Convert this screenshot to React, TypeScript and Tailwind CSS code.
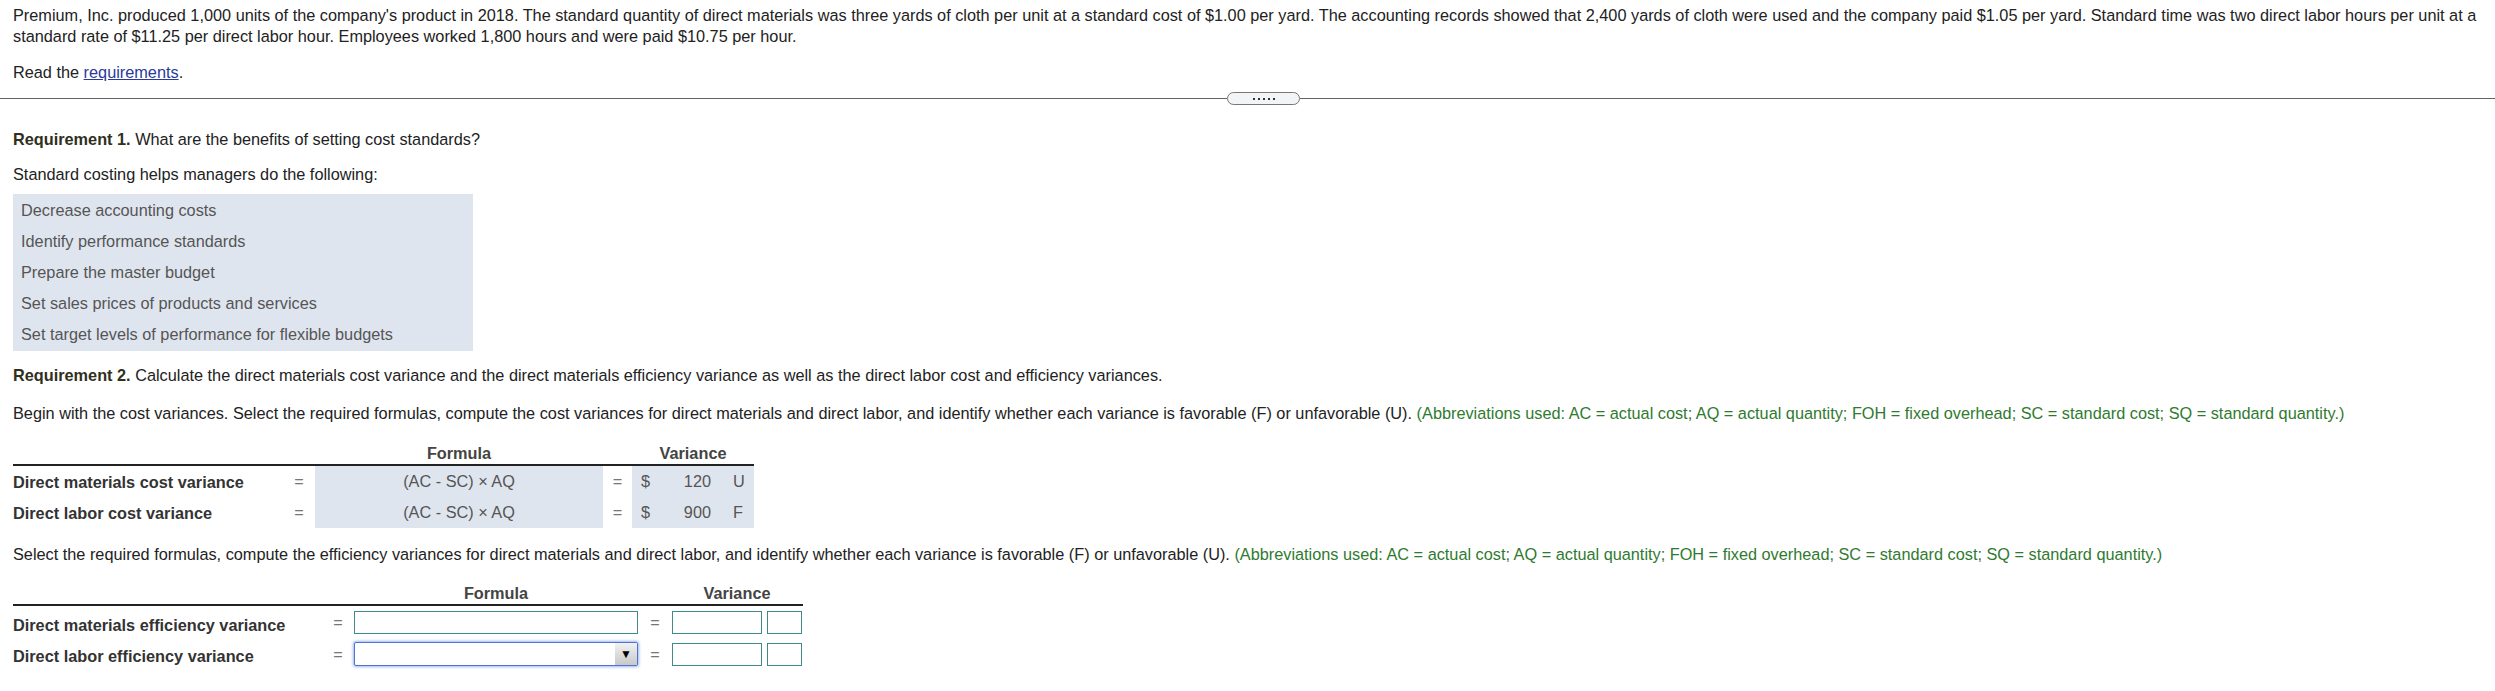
const ABBR =
  "(Abbreviations used: AC = actual cost; AQ = actual quantity; FOH = fixed overhead; SC = standard cost; SQ = standard quantity.)";

const BENEFITS = [
  "Decrease accounting costs",
  "Identify performance standards",
  "Prepare the master budget",
  "Set sales prices of products and services",
  "Set target levels of performance for flexible budgets",
];

const COST_ROWS = [
  { label: "Direct materials cost variance", amount: "120", fu: "U" },
  { label: "Direct labor cost variance", amount: "900", fu: "F" },
];

export default function App() {
  return (
    <div className="min-h-screen bg-white font-['Liberation_Sans',Arial,sans-serif] text-[16.3px] leading-[21px] text-[#222]">
      <div className="px-[13px] pt-[5px]">
        <p className="whitespace-nowrap">
          Premium, Inc. produced 1,000 units of the company's product in 2018. The standard quantity of direct
          materials was three yards of cloth per unit at a standard cost of $1.00 per yard. The accounting records
          showed that 2,400 yards of cloth were used and the company paid $1.05 per yard. Standard time was two
          direct labor hours per unit at a
          <br />
          standard rate of $11.25 per direct labor hour. Employees worked 1,800 hours and were paid $10.75 per hour.
        </p>
        <p className="mt-[15px]">
          Read the <span className="text-[#2a3a9c] underline">requirements</span>.
        </p>
      </div>

      <Divider />

      <div className="px-[13px]">
        <p className="mt-[24px]">
          <span className="font-bold text-[#30301c]">Requirement 1.</span> What are the benefits of setting cost
          standards?
        </p>
        <p className="mt-[14px]">Standard costing helps managers do the following:</p>
        <div className="mt-[9px] w-[460px] bg-[#dfe5ef] py-px">
          {BENEFITS.map((b) => (
            <div key={b} className="flex h-[31px] items-center px-[8px] text-[#555]">
              {b}
            </div>
          ))}
        </div>

        <p className="mt-[14px]">
          <span className="font-bold text-[#30301c]">Requirement 2.</span> Calculate the direct materials cost
          variance and the direct materials efficiency variance as well as the direct labor cost and efficiency
          variances.
        </p>
        <p className="mt-[17px] whitespace-nowrap">
          Begin with the cost variances. Select the required formulas, compute the cost variances for direct
          materials and direct labor, and identify whether each variance is favorable (F) or unfavorable (U).{" "}
          <span className="text-[#2f7a2f]">{ABBR}</span>
        </p>

        {/* cost variance table */}
        <div className="mt-[19px] w-[741px]">
          <div className="box-content flex h-[21px] border-b-2 border-[#222] font-bold text-[#444]">
            <div className="w-[302px]" />
            <div className="w-[288px] text-center">Formula</div>
            <div className="w-[29px]" />
            <div className="w-[122px] text-center">Variance</div>
          </div>
          {COST_ROWS.map((r) => (
            <div key={r.label} className="flex h-[31px] items-center">
              <div className="w-[276px] pt-[2px] font-bold text-[#333]">{r.label}</div>
              <div className="w-[20px] text-center text-[#777]">=</div>
              <div className="ml-[6px] flex h-full w-[288px] items-center justify-center bg-[#dfe5ef] text-[#555]">
                (AC - SC) × AQ
              </div>
              <div className="w-[29px] text-center text-[#777]">=</div>
              <div className="flex h-full w-[122px] items-center bg-[#dfe5ef] text-[#555]">
                <span className="ml-[9px] w-[10px]">$</span>
                <span className="w-[60px] text-right">{r.amount}</span>
                <span className="ml-[22px]">{r.fu}</span>
              </div>
            </div>
          ))}
        </div>

        <p className="mt-[16px] whitespace-nowrap">
          Select the required formulas, compute the efficiency variances for direct materials and direct labor, and
          identify whether each variance is favorable (F) or unfavorable (U).{" "}
          <span className="text-[#2f7a2f]">{ABBR}</span>
        </p>

        {/* efficiency variance table */}
        <div className="mt-[18px] w-[790px]">
          <div className="box-content flex h-[21px] border-b-2 border-[#222] font-bold text-[#444]">
            <div className="w-[341px]" />
            <div className="w-[284px] text-center">Formula</div>
            <div className="w-[34px]" />
            <div className="w-[130px] text-center">Variance</div>
          </div>
          <div className="mt-[5px] flex h-[23px] items-center">
            <div className="w-[317px] pt-[6px] font-bold text-[#333]">Direct materials efficiency variance</div>
            <div className="w-[16px] text-center text-[#777]">=</div>
            <div className="ml-[8px] h-[23px] w-[284px] border border-[#3f8a8a] bg-white" />
            <div className="w-[34px] text-center text-[#777]">=</div>
            <VarianceInputs />
          </div>
          <div className="mt-[8px] flex h-[24px] items-center">
            <div className="w-[317px] pt-[4px] font-bold text-[#333]">Direct labor efficiency variance</div>
            <div className="w-[16px] text-center text-[#777]">=</div>
            <div className="ml-[8px] flex h-[24px] w-[284px] items-stretch justify-end rounded-[2px] border border-[#4d74d0] bg-white shadow-[0_0_3px_1px_rgba(80,120,220,0.55)]">
              <div className="flex w-[22px] items-center justify-center bg-gradient-to-b from-[#f2f2f2] to-[#c8c8c8] text-[12px] text-black">
                ▼
              </div>
            </div>
            <div className="w-[34px] text-center text-[#777]">=</div>
            <VarianceInputs />
          </div>
        </div>
      </div>
    </div>
  );
}

function Divider() {
  return (
    <div className="mt-[9px] flex h-[13px] items-center">
      <div className="h-px w-[1227px] bg-[#5f6468]" />
      <div className="flex h-[13px] w-[73px] items-center justify-center gap-[3px] rounded-full border border-[#777] bg-[#f3f4f6]">
        {[0, 1, 2, 3, 4].map((i) => (
          <span key={i} className="h-[2px] w-[2px] bg-[#333]" />
        ))}
      </div>
      <div className="h-px flex-1 bg-[#5f6468]" />
    </div>
  );
}

function VarianceInputs() {
  return (
    <div className="flex gap-[5px]">
      <div className="h-[23px] w-[90px] border border-[#3f8a8a] bg-white" />
      <div className="h-[23px] w-[35px] border border-[#3f8a8a] bg-white" />
    </div>
  );
}
